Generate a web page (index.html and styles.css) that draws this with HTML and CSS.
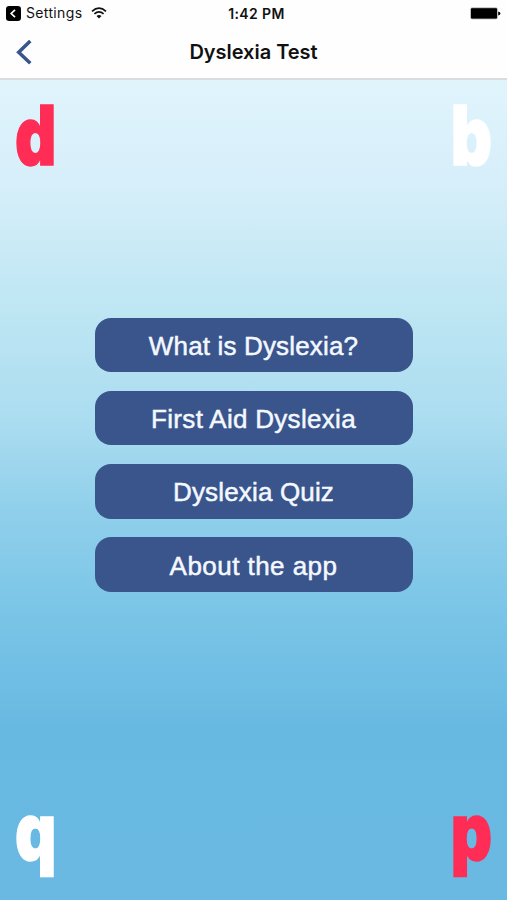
FILE: index.html
```html
<!DOCTYPE html>
<html lang="en">
<head>
<meta charset="utf-8">
<title>Dyslexia Test</title>
<link rel="stylesheet" href="styles.css">
</head>
<body>
<div class="app">
  <header class="top">
    <div class="status">
      <div class="status-left">
        <svg class="return" width="15" height="15" viewBox="0 0 15 15"><rect width="15" height="15" rx="3.2"/><path d="M9 3.8 5.2 7.5 9 11.2" fill="none" stroke="#fff" stroke-width="1.7"/></svg>
        <span class="settings">Settings</span>
        <svg class="wifi" width="16" height="12" viewBox="0 0 16 12"><path d="M1 4.3Q8-2 15 4.3M3.4 6.9Q8 2.9 12.6 6.9" fill="none" stroke="#111" stroke-width="1.7"/><path d="M5.5 9Q8 7 10.5 9L8 11.4Z" fill="#111"/></svg>
      </div>
      <span class="time">1:42 PM</span>
      <svg class="battery" width="31" height="13" viewBox="0 0 31 13"><rect x=".4" y=".6" width="27.2" height="11.6" rx="1.6" fill="#999"/><rect x="1" y="1.2" width="26" height="10.4" rx="1"/><path d="M28.2 4.5Q30.4 5 30.4 6.5T28.2 8.5Z"/></svg>
    </div>
    <nav class="nav">
      <svg class="back" width="18" height="28" viewBox="0 0 18 28"><path d="M14.3 3 2.7 14.2 14.3 25.2" fill="none" stroke="#38558c" stroke-width="3.5"/></svg>
      <h1 class="title">Dyslexia Test</h1>
    </nav>
  </header>
  <main class="main">
    <div class="letters">
      <span class="letter left red">d</span>
      <span class="letter right">b</span>
    </div>
    <div class="menu">
      <button class="item what">What is Dyslexia?</button>
      <button class="item aid">First Aid Dyslexia</button>
      <button class="item quiz">Dyslexia Quiz</button>
      <button class="item about">About the app</button>
    </div>
    <div class="letters low">
      <span class="letter left">q</span>
      <span class="letter right red">p</span>
    </div>
  </main>
</div>
</body>
</html>
```
FILE: styles.css
```css
* { box-sizing: border-box; }
body { margin: 0; font-family: Inter, "Liberation Sans", sans-serif; color: #111; }
.app { width: 507px; height: 900px; display: flex; flex-direction: column; overflow: hidden; }
.top { height: 80px; background: #fefefe; border-bottom: 2px solid #d8dcde; }
.status { height: 26px; display: grid; grid-template-columns: 1fr auto 1fr; align-items: center; padding: 0 6px; }
.status-left { display: flex; align-items: center; }
.settings { font-size: 14px; line-height: 20px; letter-spacing: .35px; margin-left: 5px; }
.wifi { margin-left: 9px; }
.time { font-size: 14px; font-weight: 600; line-height: 20px; letter-spacing: .4px; margin-top: 2px; margin-left: 6px; }
.battery { justify-self: end; }
.nav { height: 52px; display: grid; grid-template-columns: 50px 1fr 50px; align-items: center; }
.back { margin-left: 16px; }
.title { margin: 0; text-align: center; font-size: 20px; font-weight: 600; line-height: 28px; letter-spacing: -.02px; }
.main { flex: 1; display: flex; flex-direction: column; background: linear-gradient(#e0f4fc 0, #d7effa 12%, #bee6f3 28%, #aadcf0 42%, #91d0eb 52%, #7ac5e7 65%, #68b9e2 79%, #69b9e2 100%); }
.letters { height: 237.5px; display: flex; justify-content: space-between; padding: 15px 15px 0 14.5px; }
.letter { display: block; font-size: 82px; font-weight: 900; line-height: 82px; color: #fff; -webkit-text-stroke: 1.4px currentColor; transform: scaleX(.78); }
.left { transform-origin: left; }
.right { transform-origin: right; }
.red { color: #ff2c55; }
.menu { display: flex; flex-direction: column; align-items: center; gap: 18.6px; }
.item { width: 318px; height: 54.7px; flex: none; border: 0; border-radius: 16px; background: #39558c; color: #f4f8ff; font: 26px "Liberation Sans", sans-serif; letter-spacing: .16px; -webkit-text-stroke: .5px #f4f8ff; padding: 3px 0 0; }
.aid { letter-spacing: .3px; }
.about { letter-spacing: .45px; }
.low { height: auto; padding-top: 198.5px; }
.low .letter { transform: scale(.78, .965); }
```
